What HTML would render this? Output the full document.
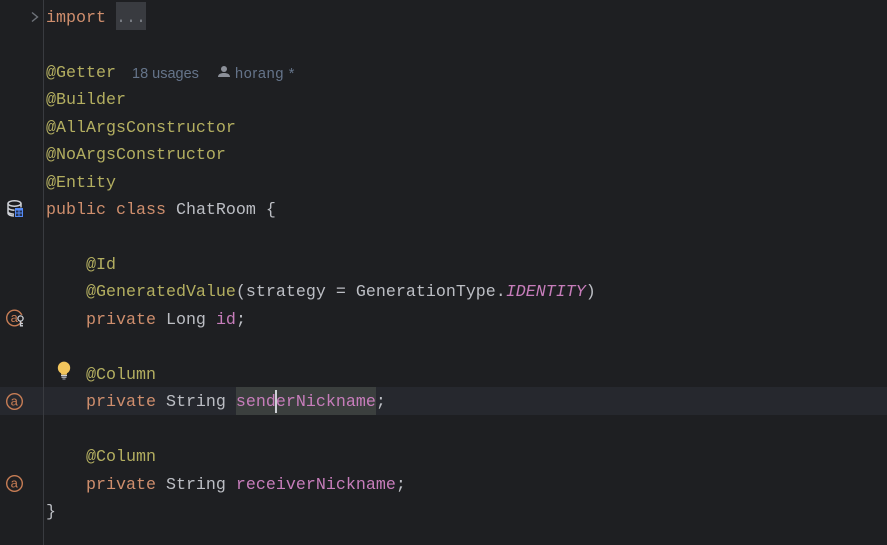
<!DOCTYPE html>
<html><head><meta charset="utf-8"><style>
html,body{margin:0;padding:0;width:887px;height:545px;overflow:hidden;background:#1e1f22}
.abs{position:absolute}
.l{position:absolute;left:46px;height:22px;line-height:22px;white-space:pre;font-family:"Liberation Mono",monospace;font-size:16.67px;color:#bcbec4;margin-top:1px}
.k{color:#cf8e6d}.a{color:#b3ae60}.f{color:#c77dbb}.i{color:#c77dbb;font-style:italic}
.h{position:absolute;height:22px;line-height:22px;white-space:pre;font-family:"Liberation Sans",sans-serif;font-size:14.5px;color:#65748a;margin-top:1px}
</style></head><body>
<div class="abs" style="left:0;top:387px;width:887px;height:28px;background:#26282e"></div>
<div class="abs" style="left:43px;top:0;width:1px;height:545px;background:#393b40"></div>
<div class="abs" style="left:116px;top:2px;width:30px;height:28px;background:#393b40"></div>
<div class="abs" style="left:236px;top:387px;width:140px;height:28px;background:#3b3f3e"></div>
<div class="abs" style="left:275px;top:390px;width:2px;height:23px;background:#ced0d6;z-index:2"></div>

<div class="l" style="top:7px"><span class="k">import</span> <span style="color:#7a7e85">...</span></div>
<div class="l a" style="top:62px">@Getter</div>
<div class="h" style="left:132px;top:62px">18 usages</div>
<div class="h" style="left:235px;top:62px;letter-spacing:.65px">horang *</div>
<div class="l a" style="top:89px">@Builder</div>
<div class="l a" style="top:117px">@AllArgsConstructor</div>
<div class="l a" style="top:144px">@NoArgsConstructor</div>
<div class="l a" style="top:172px">@Entity</div>
<div class="l" style="top:199px"><span class="k">public class</span> ChatRoom {</div>
<div class="l a" style="top:254px">    @Id</div>
<div class="l" style="top:281px">    <span class="a">@GeneratedValue</span>(strategy = GenerationType.<span class="i">IDENTITY</span>)</div>
<div class="l" style="top:309px">    <span class="k">private</span> Long <span class="f">id</span>;</div>
<div class="l a" style="top:364px">    @Column</div>
<div class="l" style="top:391px">    <span class="k">private</span> String <span class="f">senderNickname</span>;</div>
<div class="l a" style="top:446px">    @Column</div>
<div class="l" style="top:474px">    <span class="k">private</span> String <span class="f">receiverNickname</span>;</div>
<div class="l" style="top:501px">}</div>

<svg class="abs" style="left:217px;top:65px" width="14" height="14" viewBox="0 0 14 14">
  <circle cx="7" cy="4" r="3" fill="#8c9099"/>
  <path d="M1 12c0-3 2.800-4 6-4s6 1 6 4z" fill="#8c9099"/>
</svg>

<svg class="abs" style="left:0;top:0" width="80" height="545" viewBox="0 0 80 545" fill="none">
  <path d="M32 12.500L37.500 17L32 21.500" stroke="#6f737a" stroke-width="1.400"/>
  <g stroke="#ced0d6" stroke-width="1.500">
    <ellipse cx="14.500" cy="203.500" rx="6.500" ry="2.700"/>
    <path d="M8 203.500V213c0 1.800 2.800 2.900 6 3M21 203.500V207.500M8 207.500c0 1.700 3 2.700 6.500 2.700M8 211.500c0 1.500 2.500 2.500 6 2.700"/>
  </g>
  <rect x="15" y="208" width="8" height="9" fill="#1e1f22"/>
  <rect x="15.500" y="208.500" width="7" height="8" fill="#25324f" stroke="#548af7"/>
  <path d="M15.500 209.500H22.500" stroke="#548af7" stroke-width="2"/>
  <path d="M19 210V216.500M15.500 213H22.500" stroke="#548af7"/>
  <g stroke="#c77d55" stroke-width="1.400">
    <circle cx="14.500" cy="318" r="7.800"/>
    <circle cx="14.500" cy="401.500" r="7.800"/>
    <circle cx="14.500" cy="483.500" r="7.800"/>
  </g>
  <text x="14.300" y="322" text-anchor="middle" font-family="Liberation Sans, sans-serif" font-size="13" fill="#c77d55">a</text>
  <text x="14.300" y="405.700" text-anchor="middle" font-family="Liberation Sans, sans-serif" font-size="13" fill="#c77d55">a</text>
  <text x="14.300" y="487.700" text-anchor="middle" font-family="Liberation Sans, sans-serif" font-size="13" fill="#c77d55">a</text>
  <circle cx="20.500" cy="318.500" r="3.800" fill="#1e1f22"/>
  <circle cx="20.500" cy="318.500" r="2.600" stroke="#ced0d6" stroke-width="1.300"/>
  <path d="M20.500 321V326.500M20.500 323.500H23M20.500 325.800H23" stroke="#ced0d6" stroke-width="1.300"/>
  <path d="M61 373a6.200 6.200 0 1 1 6 0l-.3 1.500h-5.400z" fill="#f2c55c" transform="translate(0 .3)"/>
  <path d="M61 375.500h6" stroke="#ced0d6" stroke-width="1.200"/>
  <path d="M61.500 377.200h5" stroke="#ced0d6" stroke-width="1.100"/>
  <path d="M62.500 379h3" stroke="#a8abb0" stroke-width="1"/>
</svg>
</body></html>
